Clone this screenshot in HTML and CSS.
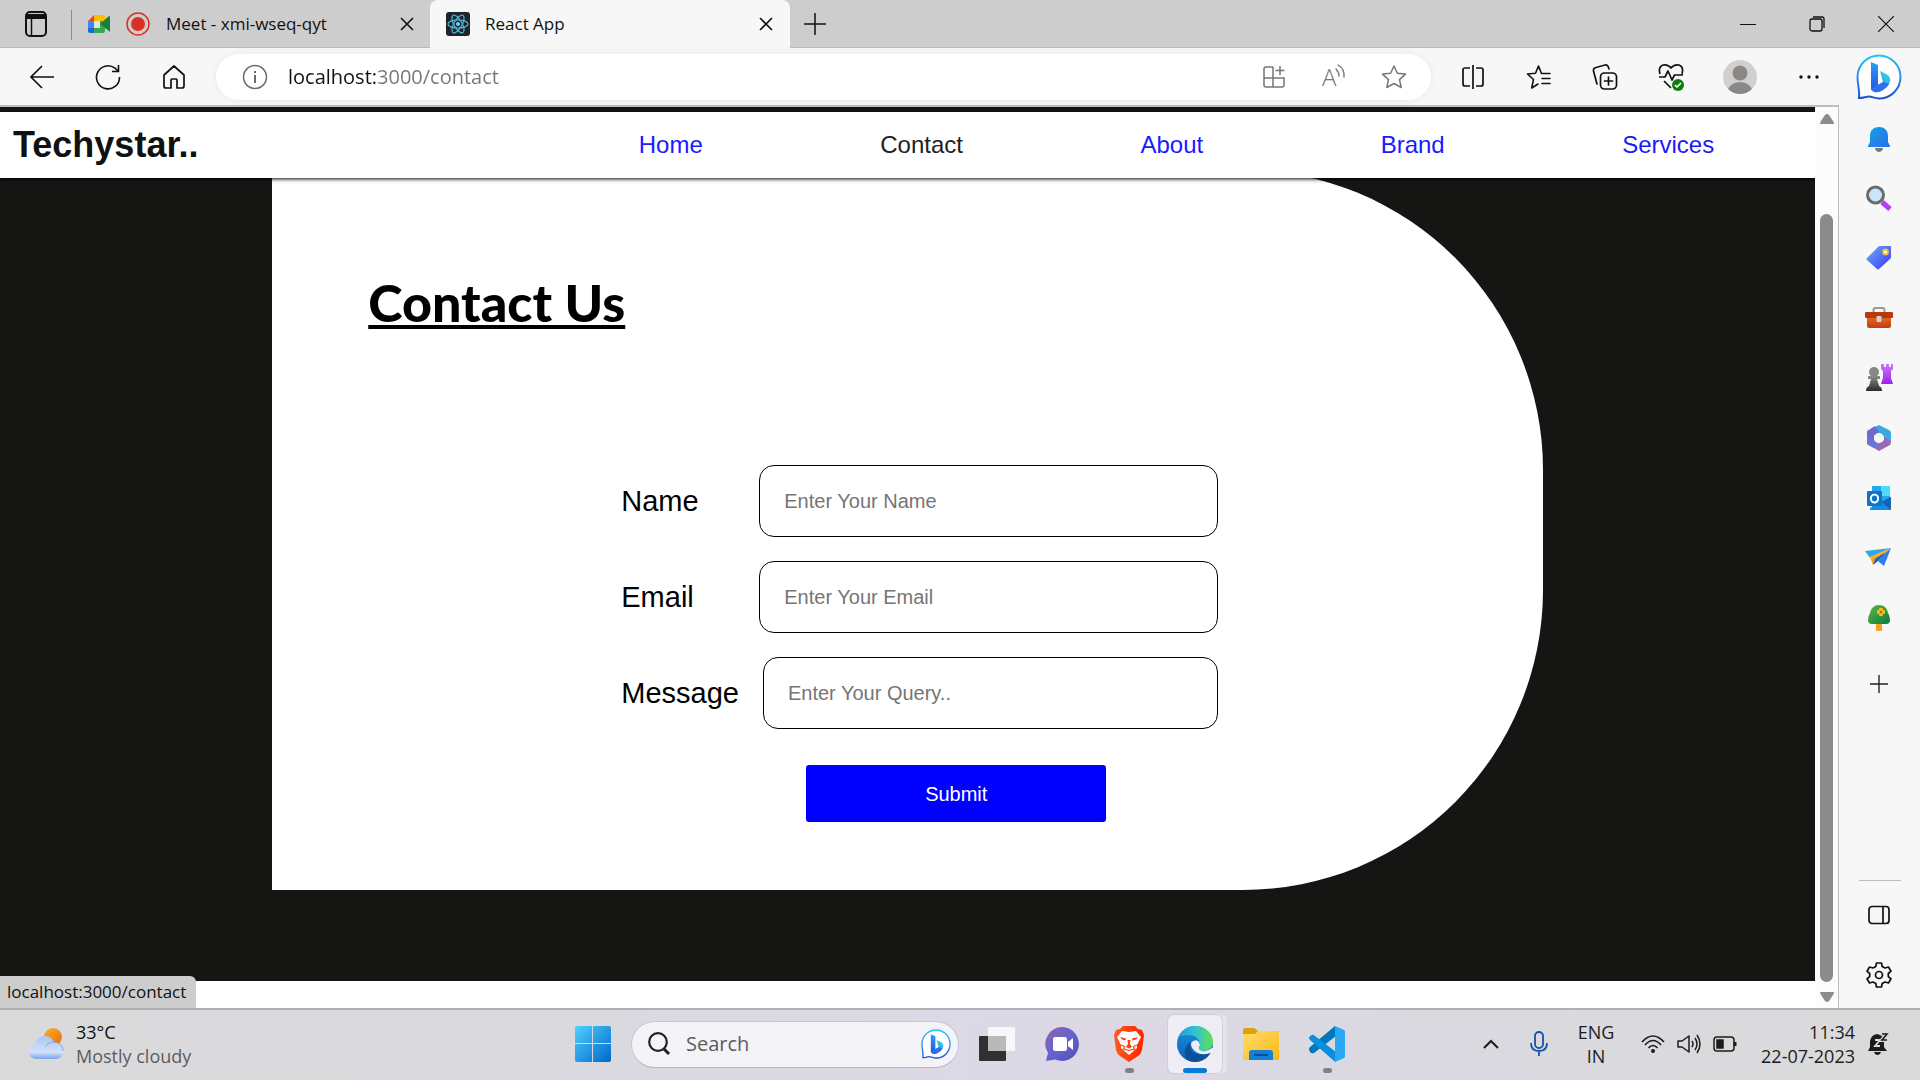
FILE: index.html
```html
<!DOCTYPE html>
<html lang="en">
<head>
<meta charset="utf-8">
<title>React App</title>
<link rel="stylesheet" href="styles.css">
</head>
<body>
<svg class="defs" width="0" height="0" aria-hidden="true">
  <defs>
    <linearGradient id="bingRing" x1="0" y1="0" x2="0" y2="1"><stop offset="0" stop-color="#1fc3ee"/><stop offset=".5" stop-color="#2b8df0"/><stop offset="1" stop-color="#1a4fd0"/></linearGradient>
    <linearGradient id="bingStem" x1="0" y1="0" x2="0" y2="1"><stop offset="0" stop-color="#2f9df5"/><stop offset="1" stop-color="#2356e0"/></linearGradient>
    <linearGradient id="bingBowl" x1="1" y1="0" x2="0" y2="1"><stop offset="0" stop-color="#35e0dc"/><stop offset="1" stop-color="#2a6df0"/></linearGradient>
    <linearGradient id="blueBell" x1="0" y1="0" x2="1" y2="1"><stop offset="0" stop-color="#12a5dc"/><stop offset="1" stop-color="#2c6bf2"/></linearGradient>
    <linearGradient id="tagFill" x1="0" y1="0" x2="1" y2="1"><stop offset="0" stop-color="#6cb0fb"/><stop offset="1" stop-color="#3a35f0"/></linearGradient>
    <linearGradient id="orange" x1="0" y1="0" x2="0" y2="1"><stop offset="0" stop-color="#f07a22"/><stop offset="1" stop-color="#c23b14"/></linearGradient>
    <linearGradient id="dark" x1="0" y1="0" x2="0" y2="1"><stop offset="0" stop-color="#8d8d8d"/><stop offset="1" stop-color="#2b2b2b"/></linearGradient>
    <linearGradient id="purple" x1="0" y1="0" x2="0" y2="1"><stop offset="0" stop-color="#c77bf8"/><stop offset="1" stop-color="#9e20ee"/></linearGradient>
    <linearGradient id="winFill" x1="0" y1="0" x2="1" y2="1"><stop offset="0" stop-color="#4fd0ff"/><stop offset="1" stop-color="#0067c8"/></linearGradient>
    <linearGradient id="tree" x1="0" y1="0" x2="1" y2="1"><stop offset="0" stop-color="#5cb846"/><stop offset="1" stop-color="#0d7a3c"/></linearGradient>
    <linearGradient id="chat" x1="0" y1="0" x2="1" y2="1"><stop offset="0" stop-color="#8c66a8"/><stop offset=".5" stop-color="#6563cf"/><stop offset="1" stop-color="#4f4fb8"/></linearGradient>
    <linearGradient id="folder" x1="0" y1="0" x2="1" y2="1"><stop offset="0" stop-color="#ffdc6a"/><stop offset="1" stop-color="#f9b817"/></linearGradient>
    <linearGradient id="cloud" x1="0" y1="0" x2="0" y2="1"><stop offset="0" stop-color="#a9c5f3"/><stop offset=".7" stop-color="#d3e2fa"/><stop offset="1" stop-color="#7ba3ec"/></linearGradient>
    <linearGradient id="sun" x1="0" y1="0" x2="1" y2="1"><stop offset="0" stop-color="#f5b325"/><stop offset="1" stop-color="#f0670f"/></linearGradient>
    <linearGradient id="edgeTop" x1="0" y1="0" x2="1" y2="0"><stop offset="0" stop-color="#1f9de0"/><stop offset=".5" stop-color="#2fc3d2"/><stop offset="1" stop-color="#66e04a"/></linearGradient>
    <linearGradient id="edgeMid" x1="0" y1="0" x2="0" y2="1"><stop offset="0" stop-color="#1b8fdc"/><stop offset="1" stop-color="#0b62b8"/></linearGradient>
    <linearGradient id="brave" x1="0" y1="0" x2="1" y2="0"><stop offset="0" stop-color="#ff5a1f"/><stop offset="1" stop-color="#ff2200"/></linearGradient>
    <symbol id="bing" viewBox="0 0 46 46">
      <path d="M3 44 C4 37 1.500 31 1.500 23 A21.500 21.500 0 1 1 23 44.500 C19 44.500 16 42.500 13 42.500 C10 42.500 7 44 3 44 Z" fill="#fff" stroke="url(#bingRing)" stroke-width="2"/>
      <path d="M15 8 L22 11 V32 L15 36 Z" fill="url(#bingStem)"/>
      <path d="M24 17 L31 20.500 Q35 23 34 28 Q32 34 24 37.500 Q18 40 15 35 L27 28 Z" fill="url(#bingBowl)"/>
      <path d="M15 35 L27 28 L33 30 Q30 35 24 37.500 Q18 40 15 35 Z" fill="#2e6ff0"/>
    </symbol>
  </defs>
</svg>

<header class="tabstrip">
  <button class="tab-actions" aria-label="Tab actions"><svg width="22" height="26" viewBox="0 0 22 26" fill="none" stroke="#111" stroke-width="2"><rect x="1" y="1" width="20" height="24" rx="4"/><path d="M6.500 7V25" stroke-width="1.500"/><path d="M2 3h18v5H2z" fill="#111" stroke="none"/></svg></button>
  <div class="tab">
    <svg width="22" height="18" viewBox="0 0 22 18"><path d="M0 6L6 0V6Z" fill="#ea4335"/><path d="M6 0H17V6H6Z" fill="#fbbc04"/><path d="M0 6H6V13H0Z" fill="#4285f4"/><path d="M0 13H6V18H2Q0 18 0 16Z" fill="#1967d2"/><path d="M6 13H12V6H17V16Q17 18 15 18H6Z" fill="#34a853"/><path d="M12 9L21 1Q22 1 22 2V16Q22 17 21 16Z" fill="#188038"/><path d="M6 6H12V13H6Z" fill="#dfe5e2"/></svg>
    <svg width="24" height="24" viewBox="0 0 24 24"><circle cx="12" cy="12" r="11" fill="none" stroke="#d93025" stroke-width="1.500"/><circle cx="12" cy="12" r="7" fill="#d93025"/></svg>
    <span class="tab-title">Meet - xmi-wseq-qyt</span>
    <button aria-label="Close tab"><svg width="14" height="14" viewBox="0 0 14 14" stroke="#111" stroke-width="1.600"><path d="M1 1L13 13M13 1L1 13"/></svg></button>
  </div>
  <div class="tab active">
    <svg width="24" height="24" viewBox="0 0 24 24"><rect width="24" height="24" rx="3" fill="#20232a"/><g fill="none" stroke="#4fb9d6" stroke-width="1.200"><ellipse cx="12" cy="12" rx="10" ry="4"/><ellipse cx="12" cy="12" rx="10" ry="4" transform="rotate(60 12 12)"/><ellipse cx="12" cy="12" rx="10" ry="4" transform="rotate(120 12 12)"/></g><circle cx="12" cy="12" r="2" fill="#61dafb"/></svg>
    <span class="tab-title">React App</span>
    <button aria-label="Close tab"><svg width="14" height="14" viewBox="0 0 14 14" stroke="#111" stroke-width="1.600"><path d="M1 1L13 13M13 1L1 13"/></svg></button>
  </div>
  <button class="new-tab" aria-label="New tab"><svg width="22" height="22" viewBox="0 0 22 22" stroke="#111" stroke-width="1.500"><path d="M11 0V22M0 11H22"/></svg></button>
  <div class="window-controls">
    <button aria-label="Minimize"><svg width="16" height="16" viewBox="0 0 16 16" stroke="#111"><path d="M0 8.500H16"/></svg></button>
    <button aria-label="Restore"><svg width="16" height="16" viewBox="0 0 16 16" fill="none" stroke="#111" stroke-width="1.300"><rect x="1" y="3" width="12" height="12" rx="2"/><path d="M4 1H13Q15 1 15 3V12"/></svg></button>
    <button aria-label="Close"><svg width="16" height="16" viewBox="0 0 16 16" stroke="#111" stroke-width="1.200"><path d="M0 0L16 16M16 0L0 16"/></svg></button>
  </div>
</header>

<div class="toolbar">
  <button class="tool" aria-label="Back"><svg width="24" height="24" viewBox="0 0 24 24" fill="none" stroke="#111" stroke-width="1.600"><path d="M12 1L1 12L12 23M1 12H24"/></svg></button>
  <button class="tool" aria-label="Refresh"><svg width="26" height="26" viewBox="0 0 26 26" fill="none" stroke="#111" stroke-width="1.600"><path d="M24.500 13A11.500 11.500 0 1 1 20 4.200L23 7M23.500 1V7.500H17"/></svg></button>
  <button class="tool" aria-label="Home"><svg width="24" height="24" viewBox="0 0 24 24" fill="none" stroke="#111" stroke-width="1.700" stroke-linejoin="round"><path d="M2 10L12 1L22 10V21Q22 23 20 23H15V15Q15 14 14 14H10Q9 14 9 15V23H4Q2 23 2 21Z"/></svg></button>
  <div class="address">
    <svg width="26" height="26" viewBox="0 0 26 26" fill="none" stroke="#6b6b6b" stroke-width="1.500"><circle cx="13" cy="13" r="11.500"/><path d="M13 11V19M13 7V9" stroke-width="2"/></svg>
    <input type="text" aria-label="Address" value="localhost:3000/contact">
    <button aria-label="Install app"><svg width="24" height="24" viewBox="0 0 24 24" fill="none" stroke="#767676" stroke-width="1.500"><path d="M11 2H4Q2 2 2 4V20Q2 22 4 22H20Q22 22 22 20V13H2M11 2V22M18 1V10M13.500 5.500H22.500"/></svg></button>
    <button aria-label="Read aloud"><svg width="28" height="40" viewBox="0 0 28 40" fill="none" stroke="#767676" stroke-width="1.400"><text x="2" y="29" class="glyph-a">A</text><path d="M16 12Q19 15 19 19M18 8Q25 12 24 20" stroke-linecap="round"/></svg></button>
    <button aria-label="Add to favorites"><svg width="26" height="26" viewBox="0 0 26 26" fill="none" stroke="#767676" stroke-width="1.500" stroke-linejoin="round"><path d="M13 2L16.400 9.200L24.500 10.100L18.500 15.600L20.200 23.500L13 19.500L5.800 23.500L7.500 15.600L1.500 10.100L9.600 9.200Z"/></svg></button>
  </div>
  <button class="tool" aria-label="Split screen"><svg width="24" height="24" viewBox="0 0 24 24" fill="none" stroke="#111" stroke-width="1.700"><path d="M9 3H4Q2 3 2 5V19Q2 21 4 21H9M15 3H20Q22 3 22 5V19Q22 21 20 21H15M12 0V24"/></svg></button>
  <button class="tool" aria-label="Favorites"><svg width="26" height="26" viewBox="0 0 26 26" fill="none" stroke="#111" stroke-width="1.600" stroke-linejoin="round" stroke-linecap="round"><path d="M24 9.500H15.500L12.500 2L9.500 9.300L1.500 10L7.500 15.500L5.700 24L12 20M16 14.500H24M16 19.500H24"/></svg></button>
  <button class="tool" aria-label="Collections"><svg width="26" height="26" viewBox="0 0 26 26" fill="none" stroke="#111" stroke-width="1.700" stroke-linecap="round"><rect x="8.500" y="9" width="16" height="16" rx="4"/><path d="M16.500 13V21M12.500 17H20.500M5 20L1.500 7Q1 4 4 3.500L13 1Q16 .500 17 5"/></svg></button>
  <button class="tool" aria-label="Browser essentials"><svg width="26" height="28" viewBox="0 0 26 28" fill="none" stroke="#111" stroke-width="1.700" stroke-linejoin="round"><path d="M2 11Q0 4 5 2Q10 1 13 5Q16 1 21 2Q26 4 24 11M1 14H7L10 8L14 17L16.500 12H25M6 18L13 25"/><circle cx="20" cy="22" r="6" fill="#107c10" stroke="none"/><path d="M17 22L19 24L23 20" stroke="#fff"/></svg></button>
  <button class="tool profile" aria-label="Profile"><svg width="34" height="34" viewBox="0 0 34 34"><clipPath id="av"><circle cx="17" cy="17" r="17"/></clipPath><g clip-path="url(#av)"><rect width="34" height="34" fill="#d2d0ce"/><circle cx="17" cy="13" r="7.500" fill="#8a8886"/><ellipse cx="17" cy="31" rx="12" ry="9" fill="#8a8886"/></g></svg></button>
  <button class="tool" aria-label="Settings and more"><svg width="20" height="4" viewBox="0 0 20 4" fill="#111"><circle cx="2" cy="2" r="1.700"/><circle cx="10" cy="2" r="1.700"/><circle cx="18" cy="2" r="1.700"/></svg></button>
  <button class="tool bing-button" aria-label="Bing chat"><svg width="46" height="46"><use href="#bing"/></svg></button>
</div>

<div class="workspace">
  <div class="viewport">
    <header class="site-header">
      <h1>Techystar..</h1>
      <nav>
        <a href="#home">Home</a>
        <a href="#contact" class="current">Contact</a>
        <a href="#about">About</a>
        <a href="#brand">Brand</a>
        <a href="#services">Services</a>
      </nav>
    </header>
    <main class="site-main">
      <section class="card">
        <h2>Contact Us</h2>
        <form>
          <div class="row"><label for="name">Name</label><input id="name" type="text" placeholder="Enter Your Name"></div>
          <div class="row"><label for="email">Email</label><input id="email" type="email" placeholder="Enter Your Email"></div>
          <div class="row"><label for="message">Message</label><input id="message" type="text" placeholder="Enter Your Query.."></div>
          <button type="button">Submit</button>
        </form>
      </section>
    </main>
    <div class="status">localhost:3000/contact</div>
  </div>
  <div class="scrollbar">
    <svg width="14" height="10" viewBox="0 0 14 10"><path d="M0 10Q0 9 1 7L5 1Q7 -1 9 1L13 7Q14 9 14 10Z" fill="#8b8b8b"/></svg>
    <div class="thumb"></div>
    <svg width="14" height="10" viewBox="0 0 14 10"><path d="M0 0Q0 1 1 3L5 9Q7 11 9 9L13 3Q14 1 14 0Z" fill="#8b8b8b"/></svg>
  </div>
  <aside class="sidebar">
    <button aria-label="Notifications"><svg width="28" height="28" viewBox="0 0 28 28"><path d="M10 24H18Q18 27 14 28Q10 27 10 24Z" fill="#777"/><path d="M14 3C19 3 23 6 23 12V18L25 22V23H3V22L5 18V12C5 6 9 3 14 3Z" fill="url(#blueBell)"/></svg></button>
    <button aria-label="Search"><svg width="28" height="28" viewBox="0 0 28 28"><path d="M17 18L25 25" stroke="#b93af5" stroke-width="5"/><circle cx="10.500" cy="11" r="8" fill="#c9e5fb" stroke="#6c6c6c" stroke-width="3"/></svg></button>
    <button aria-label="Shopping"><svg width="28" height="28" viewBox="0 0 28 28"><path d="M13 3Q14 2 15 2H25Q26 2 26 3V13Q26 14 25 15L14 25Q13 26 12 25L2 16Q1 15 2 14Z" fill="url(#tagFill)"/><circle cx="20.500" cy="8" r="2.500" fill="#fff" stroke="#efc12a" stroke-width="1.800"/></svg></button>
    <button aria-label="Tools"><svg width="28" height="28" viewBox="0 0 28 28"><path d="M8.500 9V6Q8.500 4 10.500 4H17.500Q19.500 4 19.500 6V9" fill="none" stroke="#999" stroke-width="2"/><rect x="2" y="9" width="24" height="15" rx="2" fill="url(#orange)"/><rect x="0" y="8" width="28" height="6" rx="1" fill="#b73a0b"/><rect x="11.500" y="12" width="5" height="6" rx="1" fill="#d0d0d0"/></svg></button>
    <button aria-label="Games"><svg width="28" height="28" viewBox="0 0 28 28"><path d="M16 0H19V3H21V0H24V3H26V0H28V5L26 7V14L28 20H16L18 14V7L16 5Z" fill="url(#purple)"/><circle cx="9" cy="8" r="5" fill="#888"/><path d="M3 12H15V15H12L14 22Q17 23 17 27H1Q1 23 4 22L6 15H3Z" fill="url(#dark)"/></svg></button>
    <button aria-label="Microsoft 365"><svg width="28" height="28" viewBox="0 0 28 28"><path d="M14 1L24 6Q26 7 26 9V18L19 14L14 9L9 12L10 3Z" fill="#3aa9e0"/><path d="M10 2L2 7V20L9 24V11L14 8Z" fill="#7468c8"/><path d="M2 20L14 27L25 21Q26 20 26 17L19 13V16L9 22Z" fill="#9a68b8"/><path d="M2 13V20L9 24L14 20L9 16Z" fill="#6477d8"/><circle cx="14" cy="14" r="5" fill="#f7f7f7"/></svg></button>
    <button aria-label="Outlook"><svg width="28" height="28" viewBox="0 0 28 28"><rect x="7" y="2" width="18" height="23" fill="#28a8ea"/><path d="M16 2H25V12H16Z" fill="#50d9ff"/><path d="M5 24L26 13V26H5Z" fill="#1490df"/><path d="M16 18L26 26V13Z" fill="#1267b4"/><rect x="2" y="7" width="15" height="15" rx="1" fill="#0a74ce"/><ellipse cx="9.500" cy="14.500" rx="3.600" ry="4" fill="none" stroke="#fff" stroke-width="2"/></svg></button>
    <button aria-label="Drop"><svg width="28" height="28" viewBox="0 0 28 28"><path d="M0 7L26 4L5 14Z" fill="#2fa7e8"/><path d="M26 4L19 22L13 17L26 4Z" fill="#2c7ef0"/><path d="M5 13L26 4L10 16L8 21Z" fill="#f0a41e"/><path d="M26 4L10 15L8 21L13 17Z" fill="#205fc8"/><path d="M26 4L5 13L6 15L20 9Z" fill="#f9b62a"/></svg></button>
    <button aria-label="Browser garden"><svg width="28" height="28" viewBox="0 0 28 28"><rect x="11" y="19" width="6" height="8" rx="1" fill="#f2a51c"/><path d="M14 1C19 1 22 4 23 9Q25 12 25 16Q25 20 21 20H7Q3 20 3 16Q3 12 5 9C6 4 9 1 14 1Z" fill="url(#tree)"/><path d="M16 4V12M12 8H20" stroke="#f9c31d" stroke-width="3.500"/><circle cx="16" cy="8" r="1.500" fill="#e5531a"/></svg></button>
    <button class="add" aria-label="Customize"><svg width="18" height="18" viewBox="0 0 18 18" stroke="#222" stroke-width="1.400"><path d="M9 0V18M0 9H18"/></svg></button>
    <div class="sidebar-end">
      <button aria-label="Hide sidebar"><svg width="22" height="20" viewBox="0 0 22 20" fill="none" stroke="#111" stroke-width="1.700"><rect x="1" y="1.500" width="20" height="17" rx="3"/><path d="M15 1.500V18.500"/></svg></button>
      <button aria-label="Settings"><svg width="26" height="26" viewBox="0 0 26 26" fill="none" stroke="#111" stroke-width="1.700" stroke-linejoin="round"><path d="M10.500 1H15.500L16.200 4.500L19 6L22.500 5L25 9.200L22.300 11.500V14.500L25 16.800L22.500 21L19 20L16.200 21.500L15.500 25H10.500L9.800 21.500L7 20L3.500 21L1 16.800L3.700 14.500V11.500L1 9.200L3.500 5L7 6L9.800 4.500Z"/><circle cx="13" cy="13" r="3.500"/></svg></button>
    </div>
  </aside>
</div>

<footer class="taskbar">
  <div class="weather">
    <svg width="36" height="34" viewBox="0 0 36 34"><circle cx="25" cy="10" r="9" fill="url(#sun)"/><path d="M8 32Q1 31 1 25Q1 19 7 18Q9 9 17 9Q23 9 26 15Q35 16 35 24Q35 31 28 32Z" fill="url(#cloud)"/><path d="M17 20Q20 15 26 15Q35 16 35 24" fill="none" stroke="#7fa3e6" stroke-width="1"/></svg>
    <div><div>33°C</div><div class="muted">Mostly cloudy</div></div>
  </div>
  <div class="apps">
    <button aria-label="Start"><svg width="36" height="36" viewBox="0 0 36 36"><path d="M2 0H17V17H0V2Q0 0 2 0ZM18 0H34Q36 0 36 2V17H18ZM0 18H17V36H2Q0 36 0 34ZM18 18H36V34Q36 36 34 36H18Z" fill="url(#winFill)"/></svg></button>
    <div class="search">
      <svg width="24" height="24" viewBox="0 0 24 24" fill="none" stroke="#222" stroke-width="2.200"><circle cx="11" cy="10" r="8.800"/><path d="M17 17L22 22" stroke-width="3"/></svg>
      <input type="text" aria-label="Search" placeholder="Search">
      <svg width="30" height="30"><use href="#bing"/></svg>
    </div>
    <button aria-label="Task view"><svg width="36" height="36" viewBox="0 0 36 36"><rect x="0" y="10" width="27" height="25" rx="1" fill="#303030"/><rect x="9" y="1" width="27" height="24" rx="1" fill="#f7f7f7"/><path d="M9 10H27V25H9Z" fill="#b9b9b9"/></svg></button>
    <button aria-label="Chat"><svg width="36" height="36" viewBox="0 0 36 36"><path d="M18 1A17 17 0 1 1 10 33.500L1 35L3 27A17 17 0 0 1 18 1Z" fill="url(#chat)"/><rect x="8" y="11" width="14" height="14" rx="2" fill="#fff"/><path d="M23 16L28 12V24L23 20Z" fill="#fff"/></svg></button>
    <button class="running" aria-label="Brave"><svg width="36" height="36" viewBox="0 0 36 36"><path d="M12 0H24L27 3L31 4L33 9L31 24Q30 28 27 30L18 36L9 30Q6 28 5 24L3 9L5 4L9 3Z" fill="url(#brave)"/><path d="M18 6L25 5L30 11L26 19L26 22L18 29L10 22L10 19L6 11L11 5Z" fill="#fff"/><path d="M9 11L15 12.500L14.500 14.500L11 13.500ZM27 11L21 12.500L21.500 14.500L25 13.500ZM16.500 14H19.500L19 18L21 21L18 22.500L15 21L17 18Z" fill="#ff3f12"/><path d="M10 19L13.500 20.500L12.500 23L18 24.500L23.500 23L22.500 20.500L26 19" fill="none" stroke="#ff3f12" stroke-width="1.200"/></svg></button>
    <button class="running focused" aria-label="Microsoft Edge"><svg width="36" height="36" viewBox="0 0 36 36"><circle cx="18" cy="18" r="18" fill="url(#edgeMid)"/><path d="M1 12C4 4 11 0 18 0C28 0 36 7 36 16C36 22 31 25 26 25C22 25 21 23 22 21C25 15 19 9 12 9C7 9 3 10 1 12Z" fill="url(#edgeTop)"/><path d="M14 16C11 24 17 33 27 33.600Q18 38 11 34C5 29 8 19 14 16Z" fill="#0d4f9c"/><path d="M13 20C14 28 22 31 33 26Q31 32 25 34C15 33 10 26 13 20Z" fill="#0d4f9c"/><path d="M14 17Q17 13 21 15Q24 18 22 21Q21 24 25 25Q30 26 35 22H37V27L33 27Q25 30 19 26Q14 23 14 17Z" fill="#eeecf4"/></svg></button>
    <button aria-label="File Explorer"><svg width="36" height="36" viewBox="0 0 36 36"><path d="M0 4Q0 2 2 2H11L15 5H34Q36 5 36 7V12H0Z" fill="#e0a00c"/><path d="M0 8H12L15 5H34Q36 5 36 7V34H0Z" fill="url(#folder)"/><path d="M6 34V27Q6 24 9 24H27Q30 24 30 27V34Z" fill="#1380d8"/><path d="M11 29H25" stroke="#084f96" stroke-width="2"/></svg></button>
    <button class="running" aria-label="Visual Studio Code"><svg width="36" height="36" viewBox="0 0 36 36"><path d="M26 0L27 10L5 27Q3 28 1 26L0 24Q0 22 1 21Z" fill="#0078bd"/><path d="M1 14Q-1 12 1 10L3 9Q4 8 6 10L27 26V36Q26 36 24 34Z" fill="#0791dc"/><path d="M26 0L35 4Q36 5 36 6V30Q36 31 35 32L26 36Z" fill="#29a9f5"/></svg></button>
  </div>
  <div class="tray">
    <button class="chevron" aria-label="Hidden icons"><svg width="18" height="12" viewBox="0 0 18 12" fill="none" stroke="#1c1c1c" stroke-width="2"><path d="M2 10L9 3L16 10"/></svg></button>
    <button class="mic" aria-label="Microphone"><svg width="18" height="26" viewBox="0 0 18 26" fill="none" stroke="#1551a8" stroke-width="1.800"><rect x="5" y="1" width="8" height="16" rx="4"/><path d="M1 12Q1 20 9 20Q17 20 17 12M9 20V25"/></svg></button>
    <div class="lang"><div>ENG</div><div>IN</div></div>
    <div class="system">
      <svg width="24" height="20" viewBox="0 0 24 20" fill="none" stroke="#1c1c1c" stroke-width="1.700"><path d="M1 8Q12 -4 23 8M4 11Q12 2 20 11M7.500 14Q12 9 16.500 14"/><circle cx="12" cy="17" r="2" fill="#1c1c1c" stroke="none"/></svg>
      <svg width="24" height="20" viewBox="0 0 24 20" fill="none" stroke="#1c1c1c" stroke-width="1.500" stroke-linejoin="round"><path d="M1 7H5L12 2V18L5 13H1ZM15 7Q17 10 15 13M18 4Q22 10 18 16M20 1Q26 10 20 19"/></svg>
      <svg width="24" height="16" viewBox="0 0 24 16" fill="none" stroke="#1c1c1c" stroke-width="1.500"><rect x="1" y="1" width="20" height="14" rx="3"/><path d="M22 6V10" stroke-width="3"/><path d="M4 4H10V12H4Z" fill="#1c1c1c"/></svg>
    </div>
    <div class="clock"><div>11:34</div><div>22-07-2023</div></div>
    <svg width="22" height="24" viewBox="0 0 22 24"><path d="M10 2Q17 3 17 10V15L20 19H1L3 15V9Q4 3 10 2ZM7 20H14Q13 23 10.500 23Q8 23 7 20Z" fill="#1c1c1c"/><path d="M8 8H13L8 14H13" fill="none" stroke="#ddd" stroke-width="1.800"/><path d="M15 2H20L15 8H20" fill="none" stroke="#dadada" stroke-width="4"/><path d="M15 2H20L15 8H20" fill="none" stroke="#1c1c1c" stroke-width="1.600"/></svg>
  </div>
</footer>
</body>
</html>
```
FILE: styles.css
```css
* { box-sizing: border-box; }

body {
  margin: 0;
  height: 100vh;
  display: flex;
  flex-direction: column;
  overflow: hidden;
  background: #f7f7f7;
  color: #111;
  font: 17px/24px "Segoe UI", "Open Sans", sans-serif;
}

button {
  display: flex;
  align-items: center;
  justify-content: center;
  padding: 0;
  border: 0;
  background: none;
  color: inherit;
  font: inherit;
}

input { min-width: 0; outline: 0; }
svg { display: block; flex: none; }
.defs { position: absolute; }

/* Tab strip */
.tabstrip {
  display: flex;
  flex: none;
  height: 48px;
  background: #cdcdcd;
  box-shadow: inset 0 -1px #b8b8b8;
}
.tab-actions { width: 72px; position: relative; }
.tab-actions::after {
  content: "";
  position: absolute;
  right: 0;
  top: 10px;
  width: 1px;
  height: 30px;
  background: #8a8a8a;
}
.tab {
  display: flex;
  align-items: center;
  gap: 16px;
  width: 358px;
  padding: 0 16px;
}
.tab-title { flex: 1; white-space: nowrap; }
.tab.active {
  width: 360px;
  gap: 15px;
  background: #f7f7f7;
  border-radius: 8px 8px 0 0;
  padding-right: 17px;
}
.new-tab { width: 50px; }
.window-controls { display: flex; margin-left: auto; }
.window-controls button { width: 69px; }

/* Toolbar */
.toolbar {
  display: flex;
  align-items: center;
  flex: none;
  height: 57px;
  padding-left: 9px;
}
.tool { width: 66px; height: 46px; flex: none; }
.profile { width: 72px; }
.bing-button { width: 74px; margin-right: 4px; }
.address {
  display: flex;
  align-items: center;
  flex: 1;
  height: 46px;
  margin: 0 9px;
  padding: 0 7px 0 26px;
  border-radius: 23px;
  background: #fff;
  box-shadow: 0 0 6px #e6e6e6;
}
.address input {
  flex: 1;
  margin-left: 20px;
  padding: 0;
  border: 0;
  font: 20px/28px "Segoe UI", "Open Sans", sans-serif;
  background: linear-gradient(90deg, #111 88px, #767676 88px);
  -webkit-background-clip: text;
  background-clip: text;
  color: transparent;
}
.address button { width: 60px; height: 46px; }
.glyph-a { font: 24px "Open Sans", sans-serif; font-weight: 300; fill: #767676; stroke: none; }

/* Page area */
.workspace { display: flex; flex: 1; min-height: 0; }
.viewport {
  position: relative;
  display: flex;
  flex-direction: column;
  flex: 1;
  padding: 5px 0 27px;
  overflow: hidden;
  border-top: 2px solid #bdbdbd;
  background: linear-gradient(#151513, #151513) top / 100% 20px no-repeat #fff;
  font-family: Arial, "Liberation Sans", sans-serif;
}
.site-header {
  position: relative;
  z-index: 1;
  display: flex;
  align-items: center;
  justify-content: space-between;
  flex: none;
  height: 66px;
  padding: 0 12px 0 13px;
  background: #fff;
  box-shadow: 0 1px 4px #000;
}
.site-header h1 { margin: 0; font-size: 36px; line-height: 40px; }
.site-header nav {
  display: flex;
  justify-content: space-around;
  width: 70%;
  font-size: 24px;
}
.site-header a { color: #1a1aff; text-decoration: none; }
.site-header a.current { color: #222; }

.site-main { flex: 1; min-height: 0; background: #151513; }
.card {
  width: 70%;
  margin: -8px auto 0;
  padding: 96px 0 68px;
  border-radius: 0 300px 300px 0;
  background: #fff;
  color: #000;
}
.card h2 {
  margin: 0 0 127px 96px;
  font: 900 52px/72px "Comic Sans MS", Lato, sans-serif;
  text-decoration: underline;
  text-decoration-thickness: 4px;
  text-underline-offset: 3px;
  text-decoration-skip-ink: none;
}
.card form {
  display: flex;
  flex-direction: column;
  gap: 24px;
  width: 47%;
  margin-left: 349px;
}
.row { display: flex; align-items: center; gap: 24px; }
.row label { min-width: 114px; font-size: 29px; }
.row input {
  flex: 1;
  height: 72px;
  padding: 0 24px;
  border: 1px solid #000;
  border-radius: 15px;
  font: 20px Arial, "Liberation Sans", sans-serif;
}
.row input::placeholder { color: #757575; }
.card form > button {
  width: 300px;
  height: 57px;
  margin: 12px 0 0 185px;
  border-radius: 3px;
  background: #00f;
  color: #fff;
  font-size: 20px;
}
.status {
  position: absolute;
  left: 0;
  bottom: 0;
  height: 32px;
  padding: 0 10px 0 7px;
  border-radius: 0 6px 0 0;
  background: #cdcdcd;
  color: #111;
  font: 17px/32px "Segoe UI", "Open Sans", sans-serif;
}

/* Scroll bar */
.scrollbar {
  display: flex;
  flex-direction: column;
  align-items: center;
  width: 24px;
  padding: 7px 0 6px;
  border-top: 2px solid #bdbdbd;
  border-right: 1px solid #bdbdbd;
  background: #fcfcfc;
}
.thumb {
  flex: 1;
  width: 13px;
  margin: 90px 0 10px;
  border-radius: 7px;
  background: #8b8b8b;
}

/* Edge sidebar */
.sidebar {
  display: flex;
  flex-direction: column;
  width: 81px;
  padding-top: 3px;
}
.sidebar button { width: 80px; height: 60px; flex: none; }
.sidebar .add { height: 72px; }
.sidebar-end {
  margin-top: auto;
  padding-bottom: 3px;
}
.sidebar-end::before {
  content: "";
  display: block;
  width: 42px;
  height: 1px;
  margin: 0 auto 4px;
  background: #bdbdbd;
}

/* Taskbar */
.taskbar {
  display: grid;
  grid-template-columns: 1fr auto 1fr;
  flex: none;
  height: 72px;
  padding-bottom: 2px;
  border-top: 2px solid #b0b0b3;
  background: linear-gradient(90deg, #dadada, #dad9df 30%, #dcd8e6 50%, #dad9e0 75%, #dadada);
  font-size: 18px;
}
.weather {
  display: flex;
  align-items: center;
  gap: 12px;
  padding-left: 28px;
}
.muted { color: #5c5c5c; }
.apps { display: flex; align-items: center; }
.apps > button {
  position: relative;
  width: 54px;
  height: 58px;
  margin: 0 6px;
}
.apps > button:first-child { width: 36px; margin: 0 20px 0 0; }
.apps > button:last-child { width: 36px; margin: 0 0 0 15px; }
.search {
  display: flex;
  align-items: center;
  width: 328px;
  height: 47px;
  margin-right: 5px;
  padding: 0 7px 0 15px;
  border: 1px solid #c9c6d2;
  border-bottom-color: #b5b2bd;
  border-radius: 24px;
  background: #f4f3f8;
}
.search input {
  flex: 1;
  margin-left: 15px;
  padding: 0;
  border: 0;
  background: none;
  font: 20px/28px "Segoe UI", "Open Sans", sans-serif;
}
.search input::placeholder { color: #5c5c5c; }
.running::after {
  content: "";
  position: absolute;
  left: 50%;
  bottom: 0;
  width: 9px;
  height: 5px;
  margin-left: -4px;
  border-radius: 3px;
  background: #808086;
}
.focused {
  border-radius: 6px;
  background: #eeecf4;
  box-shadow: 0 0 0 1px #d0cdd8, 4px 0 0 1px #e6e3ee;
}
.focused::after { width: 24px; margin-left: -12px; background: #0a7ad6; }

.tray {
  display: flex;
  align-items: center;
  justify-content: flex-end;
  padding-right: 31px;
  color: #1c1c1c;
}
.chevron { width: 48px; }
.mic { width: 48px; }
.lang { width: 66px; text-align: center; }
.system { display: flex; align-items: center; gap: 12px; margin: 0 24px 0 12px; }
.clock { min-width: 94px; margin-right: 12px; text-align: right; }
```
